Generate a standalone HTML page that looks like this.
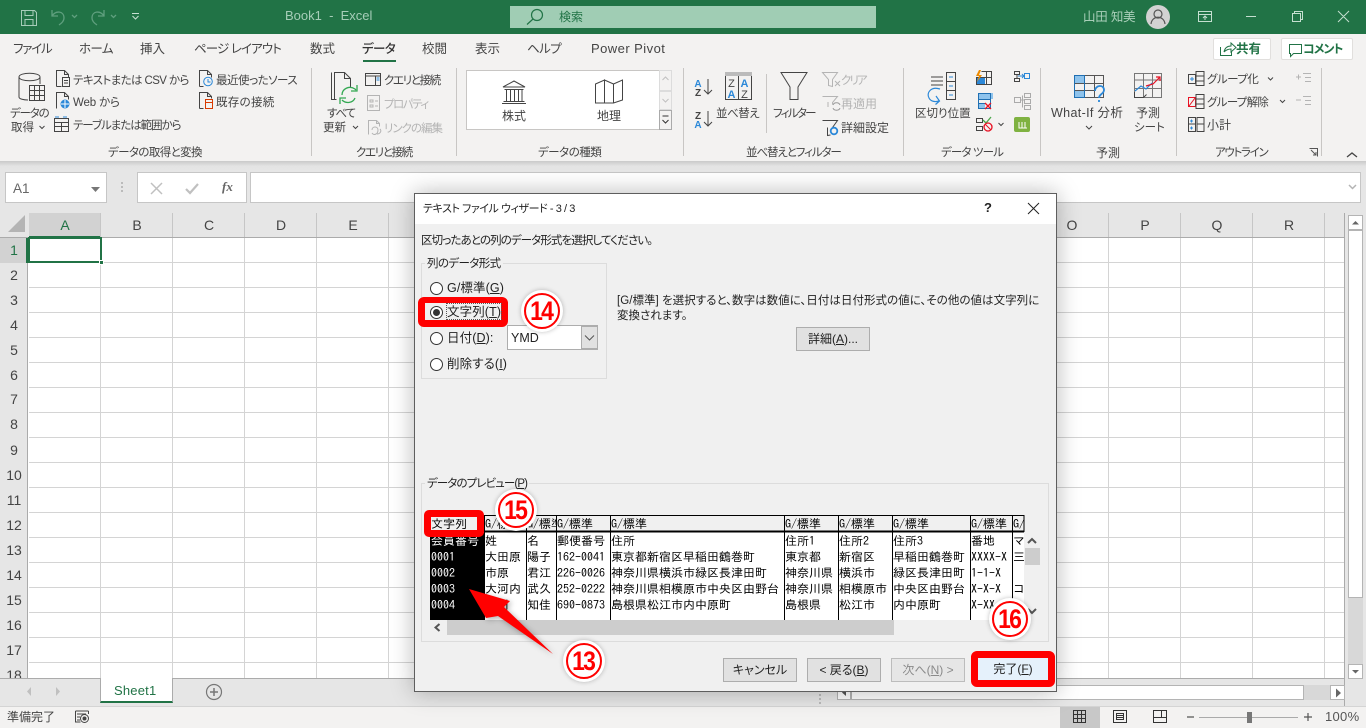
<!DOCTYPE html>
<html lang="ja"><head><meta charset="utf-8"><title>Book1 - Excel</title>
<style>
*{box-sizing:border-box}
html,body{margin:0;padding:0;width:1366px;height:728px;overflow:hidden;background:#fff}
body{font-family:"Liberation Sans","Noto Sans CJK JP",sans-serif;font-size:12px;color:#444;position:relative;font-feature-settings:"palt"}
.a{position:absolute}
.t{position:absolute;white-space:nowrap;line-height:18px;height:18px;color:#444}
.r{font-size:11.5px;margin-top:1px}
.g{color:#b4b4b4}
.tab{font-size:12.5px;color:#444}
.hd{font-size:14px;color:#444;top:216px;transform:translateX(-50%)}
.rn{font-size:14px;color:#444;left:0;width:28px;text-align:center}
.dl{color:#222;font-size:11.5px}
.m1{margin-top:1px}
.rl{color:#222;font-size:12.5px;letter-spacing:.1px}
.prev{position:absolute;font-family:"IPAGothic","Liberation Mono",monospace;font-size:12px;line-height:16px;white-space:nowrap;overflow:hidden;color:#000;font-feature-settings:normal}
.btn{position:absolute;height:24px;top:658px;width:74px;background:#e1e1e1;border:1px solid #adadad;text-align:center;line-height:22px;color:#222;font-size:12px}
u{text-underline-offset:1px}
.rad{position:absolute;width:13px;height:13px;border:1px solid #333;border-radius:50%;background:#fff}
.num{position:absolute;width:42px;height:42px;border-radius:50%;background:#fff;box-shadow:0 0 5px rgba(0,0,0,.25)}
.num i{position:absolute;left:3px;top:3px;width:36px;height:36px;border:2px solid #f00;border-radius:50%;background:#fff;font-style:normal;font-weight:bold;color:#f00;font-size:27px;line-height:32px;text-align:center;letter-spacing:-2px;font-family:"Liberation Sans",sans-serif}
.num i b{display:block;transform:scaleX(.85) translateX(-1px)}
</style></head><body>

<!-- Title bar -->
<div class="a" style="left:0;top:0;width:1366px;height:34px;background:#217346"></div>
<div class="a" style="left:510px;top:6px;width:366px;height:22px;background:#a0cdb4"></div>
<div class="t" style="left:285px;top:7px;color:#a6cdb8;font-size:13px;white-space:pre">Book1  -  Excel</div>
<div class="t" style="left:559px;top:8px;color:#217346;font-size:12px">検索</div>
<div class="t" style="left:1083px;top:8px;color:#a9cfb9;font-size:12.5px;letter-spacing:-.2px">山田 知美</div>

<!-- Ribbon bg -->
<div class="a" style="left:0;top:34px;width:1366px;height:127px;background:#f3f2f1"></div>
<div class="a" style="left:0;top:161px;width:1366px;height:52px;background:linear-gradient(#c9c9c9,#e3e3e3 5px,#e6e6e6 10px)"></div>

<!-- Tabs -->
<div class="t tab" style="left:13px;top:40px;letter-spacing:-1.2px">ファイル</div>
<div class="t tab" style="left:79px;top:40px;letter-spacing:-.6px">ホーム</div>
<div class="t tab" style="left:140px;top:40px">挿入</div>
<div class="t tab" style="left:194px;top:40px;letter-spacing:-.9px">ページ レイアウト</div>
<div class="t tab" style="left:310px;top:40px">数式</div>
<div class="t tab" style="left:362px;top:40px;font-weight:500;color:#333;letter-spacing:-.6px">データ</div>
<div class="a" style="left:363px;top:60px;width:33px;height:2px;background:#217346"></div>
<div class="t tab" style="left:422px;top:40px">校閲</div>
<div class="t tab" style="left:475px;top:40px">表示</div>
<div class="t tab" style="left:527px;top:40px;letter-spacing:-.6px">ヘルプ</div>
<div class="t tab" style="left:591px;top:40px;font-size:13px;letter-spacing:.45px">Power Pivot</div>
<div class="a" style="left:1213px;top:38px;width:58px;height:22px;background:#fff;border:1px solid #e1dfdd;border-radius:2px"></div>
<div class="t" style="left:1236px;top:40px;color:#217346;font-weight:bold;font-size:12.5px">共有</div>
<div class="a" style="left:1281px;top:38px;width:72px;height:22px;background:#fff;border:1px solid #e1dfdd;border-radius:2px"></div>
<div class="t" style="left:1303px;top:40px;color:#217346;font-weight:bold;font-size:12px;letter-spacing:-1px">コメント</div>

<!-- Gallery -->
<div class="a" style="left:466px;top:70px;width:206px;height:60px;background:#fff;border:1px solid #c8c6c4"></div>
<div class="a" style="left:659px;top:70px;width:13px;height:21px;background:#f3f2f1;border:1px solid #dcdcdc"></div>
<div class="a" style="left:659px;top:91px;width:13px;height:19px;background:#f3f2f1;border:1px solid #dcdcdc"></div>
<div class="a" style="left:659px;top:110px;width:13px;height:20px;background:#f3f2f1;border:1px solid #aaa"></div>

<!-- Ribbon labels -->
<div class="t r" style="left:10px;top:104px;letter-spacing:-1.2px">データの</div>
<div class="t r" style="left:11px;top:118px">取得</div>
<div class="t r" style="left:73px;top:71px;letter-spacing:-.6px">テキストまたは CSV から</div>
<div class="t r" style="left:73px;top:93px;letter-spacing:-.15px">Web から</div>
<div class="t r" style="left:73px;top:116px;letter-spacing:-1.05px">テーブルまたは範囲から</div>
<div class="t r" style="left:216px;top:71px;letter-spacing:-.5px">最近使ったソース</div>
<div class="t r" style="left:216px;top:93px;letter-spacing:.3px">既存の接続</div>
<div class="t r" style="left:108px;top:143px;letter-spacing:-.6px">データの取得と変換</div>
<div class="t r" style="left:327px;top:104px;letter-spacing:-1.2px">すべて</div>
<div class="t r" style="left:323px;top:118px">更新</div>
<div class="t r" style="left:384px;top:71px;letter-spacing:-1.35px">クエリと接続</div>
<div class="t r g" style="left:384px;top:95px;letter-spacing:-1.5px">プロパティ</div>
<div class="t r g" style="left:384px;top:119px;letter-spacing:-1px">リンクの編集</div>
<div class="t r" style="left:356px;top:143px;letter-spacing:-1.35px">クエリと接続</div>
<div class="t" style="left:502px;top:107px">株式</div>
<div class="t" style="left:597px;top:107px">地理</div>
<div class="t r" style="left:538px;top:143px;letter-spacing:-.5px">データの種類</div>
<div class="t r" style="left:716px;top:104px;letter-spacing:-.5px">並べ替え</div>
<div class="t r" style="left:773px;top:104px;letter-spacing:-1.7px">フィルター</div>
<div class="t r g" style="left:841px;top:71px;letter-spacing:-1.9px">クリア</div>
<div class="t g" style="left:841px;top:95px">再適用</div>
<div class="t" style="left:841px;top:119px">詳細設定</div>
<div class="t r" style="left:746px;top:143px;letter-spacing:-1.1px">並べ替えとフィルター</div>
<div class="t r" style="left:915px;top:104px">区切り位置</div>
<div class="t r" style="left:941px;top:143px;letter-spacing:-.85px">データ ツール</div>
<div class="t" style="left:1051px;top:104px;font-size:12.5px;letter-spacing:.35px">What-If 分析</div>
<div class="t" style="left:1136px;top:104px">予測</div>
<div class="t r" style="left:1134px;top:118px">シート</div>
<div class="t m1" style="left:1096px;top:143px">予測</div>
<div class="t r" style="left:1207px;top:70px;letter-spacing:-.5px">グループ化</div>
<div class="t r" style="left:1207px;top:93px;letter-spacing:-.7px">グループ解除</div>
<div class="t" style="left:1207px;top:116px">小計</div>
<div class="t r" style="left:1215px;top:143px;letter-spacing:-1.3px">アウトライン</div>

<!-- Formula bar -->
<div class="a" style="left:5px;top:172px;width:102px;height:31px;background:#fff;border:1px solid #c6c6c6"></div>
<div class="t" style="left:13px;top:180px;font-size:13.5px;color:#666">A1</div>
<div class="a" style="left:137px;top:172px;width:110px;height:31px;background:#fff;border:1px solid #c6c6c6"></div>
<div class="a" style="left:250px;top:172px;width:1111px;height:31px;background:#fff;border:1px solid #c6c6c6"></div>
<div class="t" style="left:222px;top:178px;font-family:'Liberation Serif',serif;font-style:italic;font-weight:bold;font-size:13px;color:#666">fx</div>

<!-- Grid -->
<div class="a" style="left:0;top:213px;width:1344px;height:25px;background:#e6e6e6;border-bottom:1px solid #ababab"></div>
<div class="a" style="left:29px;top:213px;width:72px;height:25px;background:#d2d2d2;border-bottom:2px solid #217346"></div>
<div class="a" style="left:0;top:238px;width:28px;height:440px;background:#e6e6e6;border-right:1px solid #ababab"></div>
<div class="a" style="left:0;top:238px;width:28px;height:25px;background:#d2d2d2;border-right:2px solid #217346"></div>
<div class="a" style="left:29px;top:238px;width:1315px;height:440px;background-color:#fff;background-image:linear-gradient(to right,#d4d4d4 1px,transparent 1px),linear-gradient(to bottom,#d4d4d4 1px,transparent 1px);background-size:72px 25px;background-position:71px 24px"></div>
<div class="a" style="left:29px;top:213px;width:1315px;height:24px;background-image:linear-gradient(to right,#c6c6c6 1px,transparent 1px);background-size:72px 24px;background-position:71px 0"></div>
<div class="t hd" style="left:65px;color:#217346">A</div>
<div class="t hd" style="left:137px">B</div><div class="t hd" style="left:209px">C</div><div class="t hd" style="left:281px">D</div><div class="t hd" style="left:353px">E</div>
<div class="t hd" style="left:1072px">O</div><div class="t hd" style="left:1145px">P</div><div class="t hd" style="left:1217px">Q</div><div class="t hd" style="left:1289px">R</div>
<div class="t rn" style="top:241px;color:#217346">1</div><div class="t rn" style="top:266px">2</div><div class="t rn" style="top:291px">3</div><div class="t rn" style="top:316px">4</div><div class="t rn" style="top:341px">5</div><div class="t rn" style="top:366px">6</div><div class="t rn" style="top:390px">7</div><div class="t rn" style="top:415px">8</div><div class="t rn" style="top:441px">9</div><div class="t rn" style="top:466px">10</div><div class="t rn" style="top:491px">11</div><div class="t rn" style="top:516px">12</div><div class="t rn" style="top:541px">13</div><div class="t rn" style="top:566px">14</div><div class="t rn" style="top:591px">15</div><div class="t rn" style="top:616px">16</div><div class="t rn" style="top:641px">17</div><div class="t rn" style="top:666px;height:12px;overflow:hidden">18</div>
<div class="a" style="left:28px;top:237px;width:74px;height:26px;border:2px solid #217346"></div>
<div class="a" style="left:99px;top:260px;width:5px;height:5px;background:#217346;border:1px solid #fff"></div>

<!-- Right scrollbar -->
<div class="a" style="left:1344px;top:213px;width:22px;height:493px;background:#e6e6e6;border-left:1px solid #ababab"></div>
<div class="a" style="left:1348px;top:215px;width:15px;height:449px;background:#d8d8d8"></div>
<div class="a" style="left:1348px;top:215px;width:15px;height:15px;background:#fff;border:1px solid #b4b4b4"></div>
<div class="a" style="left:1348px;top:230px;width:15px;height:368px;background:#fff;border:1px solid #b4b4b4"></div>
<div class="a" style="left:1348px;top:664px;width:15px;height:15px;background:#fff;border:1px solid #b4b4b4"></div>

<!-- Sheet tabs / status -->
<div class="a" style="left:0;top:678px;width:1344px;height:28px;background:#e6e6e6;border-top:1px solid #ababab"></div>
<div class="a" style="left:100px;top:678px;width:73px;height:25px;background:#fff;border:1px solid #ababab;border-top:0;border-bottom:2px solid #217346"></div>
<div class="t" style="left:114px;top:682px;color:#217346;font-size:13px;letter-spacing:.2px">Sheet1</div>
<div class="a" style="left:837px;top:685px;width:507px;height:15px;background:#d8d8d8"></div>
<div class="a" style="left:851px;top:685px;width:453px;height:15px;background:#fff;border:1px solid #b4b4b4"></div>
<div class="a" style="left:837px;top:685px;width:14px;height:15px;background:#fff;border:1px solid #b4b4b4"></div>
<div class="a" style="left:1330px;top:685px;width:15px;height:15px;background:#fff;border:1px solid #b4b4b4"></div>
<div class="a" style="left:0;top:706px;width:1366px;height:22px;background:#f3f2f1;border-top:1px solid #d4d4d4"></div>
<div class="a" style="left:1060px;top:707px;width:40px;height:21px;background:#c8c8c8"></div>
<div class="t" style="left:7px;top:708px;font-size:12px">準備完了</div>
<div class="t" style="left:1325px;top:708px;font-size:13px;color:#555;letter-spacing:.3px">100%</div>

<!-- Base icons -->
<svg class="a" style="left:0;top:0" width="1366" height="728" viewBox="0 0 1366 728" fill="none" stroke="#444" stroke-width="1">
<!-- qat -->
<g stroke="#a7cdb9"><path d="M21.500 10.500h13l2 2v13h-15zM25 10.500v5h8v-5M25 25.500v-6h8v6"/></g>
<g stroke="#5f9f7e" stroke-width="1.300"><path d="M52 10v6h6M52 16c4-6 12-5 12 2 0 3-2 5-5 7M104 10v6h-6M104 16c-4-6-12-5-12 2 0 3 2 5 5 7"/><path d="M72 15l2.500 2.500 2.500-2.500M111 15l2.500 2.500 2.500-2.500"/></g>
<path d="M132 13.500h7M132.500 16l3 3 3-3" stroke="#c8e0d3"/>
<!-- search -->
<g stroke="#217346" stroke-width="1.200"><circle cx="537" cy="15" r="5.500"/><path d="M533 19l-6 5.500"/></g>
<!-- avatar -->
<circle cx="1158" cy="17" r="12" fill="#d2d2d2" stroke="none"/>
<g stroke="#555" stroke-width="1.200"><circle cx="1158" cy="14" r="4"/><path d="M1151 24c1-9 13-9 14 0"/></g>
<!-- window -->
<g stroke="#c5dfd0"><path d="M1198.500 11.500h13v10h-13zM1198.500 14.500h13M1205 20v-4M1203 18l2-2 2 2"/><path d="M1246 16.500h10M1292.500 13.500h8v8h-8zM1294.500 13.500v-2h8v8h-2M1338 11l11 11M1349 11l-11 11"/></g>
<!-- share / comment -->
<g stroke="#217346"><path d="M1220.500 47v8.500h11v-4M1224 52c1-5 4-6 7-6v-3l5 4.500-5 4.500v-3c-3 0-5 1-7 3"/><path d="M1289.500 44.500h12v9h-8l-3 3v-3h-1z"/></g>
<!-- group separators -->
<g stroke="#c8c6c4"><path d="M311.500 68v88M456.500 68v88M683.500 68v88M903.500 68v88M1040.500 68v88M1176.500 68v88M1321.500 68v88M766.500 74v59"/></g>
<!-- get data -->
<g><path d="M19 77v20c0 2 5 3 9 3M19 77c0-5 21-5 21 0s-21 5-21 0M40 77v7"/><path d="M29.500 85.500h15v15h-15zM29.500 90.500h15M29.500 95.500h15M34.500 85.500v15M39.500 85.500v15"/></g>
<path d="M39.500 126l2.500 2.500 2.500-2.500M353 126l2.500 2.500 2.500-2.500"/>
<!-- doc icons -->
<g><path d="M56.500 86.500v-16h8l4 4v3M56.500 86.500h5M64.500 70.500v4h4"/><path d="M62.500 77.500h7v9h-7zM64 80.500h4M64 83h4"/></g>
<g><path d="M56.500 108.500v-16h8l4 4v3M64.500 92.500v4h4"/><circle cx="65" cy="104" r="4.500" fill="#2b88d8" stroke="none"/><path d="M61 104h8M65 100v8" stroke="#fff"/></g>
<g><path d="M54.500 118.500h14v13h-14zM54.500 122.500h14M54.500 126.500h14M61.500 122.500v9"/><path d="M55 117h4M63 117h4" stroke="#2b88d8"/></g>
<g><path d="M199.500 86.500v-16h8l4 4v3M199.500 86.500h4M207.500 70.500v4h4"/><circle cx="208" cy="81.500" r="4.300" stroke="#2b88d8"/><path d="M208 79v3h2.500" stroke="#2b88d8"/></g>
<g><path d="M199.500 108.500v-16h8l4 4v2M199.500 108.500h4M207.500 92.500v4h4"/><rect x="205.500" y="99.500" width="7" height="9" stroke="#d83b01"/><path d="M205.500 102.500h7" stroke="#d83b01"/></g>
<!-- refresh -->
<g><path d="M331.500 72.500v27h5M334.500 99v-26.500h10l6 6v9M344.500 72.500v6h6"/><path d="M342 95c0-6 7-10 13-6l1 1M355 98c-2 5-9 6-13 2" stroke="#33a852" stroke-width="1.300"/><path d="M357 85v6h-6M340 104v-6h6" stroke="#33a852" stroke-width="1.300"/></g>
<g><path d="M365.500 73.500h15v12h-15zM365.500 76h15M375.500 76v9.500"/><path d="M376.500 78h3M376.500 80h3" stroke="#2b88d8"/></g>
<g stroke="#b4b4b4"><path d="M367.500 95.500h12v15h-12zM370 100h3v2h-3zM370 105h3v2h-3zM375 101h3M375 106h3"/><path d="M368.500 134.500v-14h8l3 3v3M376.500 120.500v3h3"/><path d="M372 130c0-4 6-4 6 0s-4 6-6 3M380 129c2 2 0 5-3 5"/></g>
<!-- bank/map -->
<g><path d="M503 87l11-6 11 6zM504.500 89.500h19M506.500 90v11M510.500 90v11M514.500 90v11M518.500 90v11M522 90v11M503.500 101.500h21M502 103.500h24"/></g>
<g><path d="M595.500 84l9-4v23l-9-0zM604.500 80l9 4v19l-9-0zM613.500 84l9-4v20l-9 3"/></g>
<path d="M662.500 80l3-3 3 3" stroke="#c0c0c0"/><path d="M662.500 99l3 3 3-3" stroke="#c0c0c0"/><path d="M662.500 116h6M662.500 120l3 3 3-3" stroke="#333"/>
<!-- sort -->
<g stroke="#444"><path d="M708 79v15M704 90l4 4 4-4M708 111v15M704 122l4 4 4-4"/><path d="M725.500 72.500h26v27h-26zM738.500 76v23.500"/></g>
<rect x="725" y="72" width="27" height="4" fill="#bbb" stroke="none"/>
<g font-family="Liberation Sans,sans-serif" font-size="10" font-weight="bold" stroke="none" text-anchor="middle">
<text x="698" y="87" fill="#2b88d8">A</text><text x="698" y="96" fill="#444">Z</text>
<text x="698" y="119" fill="#444">Z</text><text x="698" y="128" fill="#2b88d8">A</text></g>
<g font-family="Liberation Sans,sans-serif" font-size="11" stroke="none" text-anchor="middle">
<text x="731.500" y="87" fill="#444">Z</text><text x="731.500" y="98" fill="#2b88d8" font-weight="bold">A</text>
<text x="744.500" y="87" fill="#2b88d8" font-weight="bold">A</text><text x="744.500" y="98" fill="#444">Z</text></g>
<!-- filter -->
<path d="M781 72.500h26l-9 14.500v12.500h-8v-12.500z"/>
<g stroke="#b4b4b4"><path d="M822.500 72.500h15l-5 7v7l-4-1v-6zM835 81l5 5M840 81l-5 5"/><path d="M822.500 96.500h15l-5 6v2M828 102v5"/><path d="M833 105c1-3 6-3 7 0M840 108c-1 3-6 3-7 0" stroke="#999"/></g>
<g><path d="M822.500 120.500h15l-5 7M827.500 127.500v8l3-.5"/><circle cx="834" cy="131" r="3.300" stroke="#2b88d8" stroke-width="1.800"/></g>
<!-- text to cols -->
<g><path d="M931 77h12M931 81h12M931 85h12"/><path d="M946.500 72.500h9v27h-9zM946.500 81.500h9M946.500 90.500h9"/><path d="M949 77h4M949 86h4M949 95h4" stroke="#2b88d8"/><path d="M940 89c-9-3-14 4-11 9 2 4 7 4 10 3M936 96l3.500 5-4 3.500" stroke="#2b88d8" stroke-width="1.200"/></g>
<!-- data tools -->
<rect x="977" y="77" width="8" height="7" fill="#2b88d8" stroke="none"/>
<path d="M976.500 77.500h15v7h-15zM981.500 71.500h10v13M986.500 71.500v13"/>
<path d="M979 70l-3 6h3l-2 6 5-7h-3l2-5z" fill="#ed8b00" stroke="none"/>
<rect x="979" y="93" width="14" height="6" fill="#8ec3ec" stroke="none"/><rect x="979" y="103" width="6" height="6" fill="#8ec3ec" stroke="none"/>
<path d="M978.500 93.500h12v15h-12zM978.500 99.500h12M978.500 103.500h7" stroke="#1f6fb2"/>
<path d="M985 103l6 6M991 103l-6 6" stroke="#e81123" stroke-width="1.300"/>
<path d="M976.500 118.500h6v4h-6zM976.500 126.500h6v4h-6z"/><path d="M983 120l3 3 5-6" stroke="#4aa64a" stroke-width="1.300"/><circle cx="988" cy="127" r="4" stroke="#e81123" stroke-width="1.300"/><path d="M985 124l6 6" stroke="#e81123"/>
<path d="M998.500 123l2.500 2.500 2.500-2.500"/>
<g><path d="M1014.500 71.500h5v3h-5zM1014.500 78.500h5v3h-5zM1017 74.500v4"/><path d="M1024.500 73.500h5v5h-5z" stroke="#2b88d8"/><path d="M1018 76h6M1022 74l2 2-2 2" stroke="#2b88d8"/></g>
<g stroke="#aaa"><path d="M1014.500 97.500h6v5h-6zM1024.500 93.500h6v4h-6zM1024.500 99.500h6v4h-6zM1024.500 105.500h6v4h-6zM1020.500 100h4M1022.500 95.500v12"/></g>
<rect x="1014" y="117" width="16" height="15" rx="2" fill="#7fb241" stroke="none"/><path d="M1019 122v6h8M1022 122v6M1025 122v6" stroke="#fff"/>
<!-- what if -->
<rect x="1075" y="75" width="9.500" height="9" fill="#8ec3ec" stroke="none"/><rect x="1075" y="90" width="9.500" height="7" fill="#8ec3ec" stroke="none"/>
<path d="M1074.500 75.500h29v22h-29zM1074.500 83.500h29M1074.500 90.500h20M1084.500 75.500v22M1094.500 75.500v22" stroke="#555"/>
<path d="M1074.500 75.500h10v22h-10z" stroke="#1f6fb2"/>
<path d="M1095 91c0-6 9-7 9-1 0 4-5 4-5 8M1099 100v2" stroke="#2b88d8" stroke-width="1.800"/>
<path d="M1086 126l3 3 3-3"/>
<!-- forecast -->
<path d="M1134.500 73.500h27v24h-27zM1134.500 80h27M1143.500 73.500v24M1152.500 73.500v24M1134.500 88.500h27" stroke="#777"/>
<path d="M1135 91l6-5 5 3 6-6" stroke="#2b88d8" stroke-width="1.200"/><path d="M1146 86l7-2 7-7M1156 77h4v4" stroke="#e81123" stroke-width="1.200"/>
<path d="M1134.500 92v5.500h9l3-3"/>
<!-- outline -->
<g><path d="M1188.500 74.500h7v9h-7zM1196 71.500h8v14h-8zM1196 76h8M1196 81h8"/><path d="M1190 79h4M1192 77v4" stroke="#2b88d8"/></g>
<path d="M1268 77.500l2.500 2.500 2.500-2.500M1280 100l2.500 2.500 2.500-2.500"/>
<g><path d="M1188.500 97.500h7v9h-7z" stroke="#e81123"/><path d="M1189 106l6-8" stroke="#e81123"/><path d="M1196 94.500h8v14h-8zM1196 99h8M1196 104h8"/></g>
<g><path d="M1188.500 117.500h7v14h-7zM1188.500 124h7"/><path d="M1197 117.500h7v14h-7zM1197 124h7"/><path d="M1190 121h3M1191.500 119.500v3M1190 128h3M1191.500 126.500v3" stroke="#2b88d8"/></g>
<g stroke="#b4b4b4"><path d="M1296 77h5M1298.500 74.500v5M1303 73.500h8M1305 77.500h6M1305 81.500h6"/><path d="M1296 100h5M1303 96.500h8M1305 100.500h6M1305 104.500h6"/></g>
<path d="M1309.500 148.500h8v8M1311 150l5 5M1316 152v3h-3" stroke="#555"/>
<path d="M1347 157l5-4 5 4" stroke="#444" stroke-width="1.300"/>
<!-- formula -->
<path d="M91 187h9l-4.500 5z" fill="#777" stroke="none"/>
<g fill="#bbb" stroke="none"><rect x="121" y="182" width="2" height="2"/><rect x="121" y="186" width="2" height="2"/><rect x="121" y="190" width="2" height="2"/></g>
<path d="M151 183l11 11M162 183l-11 11" stroke="#c0c0c0" stroke-width="1.500"/>
<path d="M186 189l4 4 8-9" stroke="#c0c0c0" stroke-width="2.200"/>
<path d="M1349 185l3.500 3.500 3.500-3.500" stroke="#b4b4b4" stroke-width="1.500"/>
<path d="M25 232h-17l17-17z" fill="#b4b4b4" stroke="none"/>
<path d="M1352 224.500l3.500-3.500 3.500 3.500z" fill="#666" stroke="none"/>
<path d="M1352 670l3.500 3.500 3.500-3.500z" fill="#666" stroke="none"/>
<path d="M1336 688.500v9l5-4.500z" fill="#666" stroke="none"/>
<path d="M846 689v7l-4-3.500z" fill="#555" stroke="none"/>
<g fill="#bbb" stroke="none"><rect x="819" y="694" width="2" height="2"/><rect x="819" y="698" width="2" height="2"/><rect x="819" y="702" width="2" height="2"/></g>
<!-- sheet nav -->
<path d="M31 687v9l-4-4.500z" fill="#c0c0c0" stroke="none"/><path d="M56 687v9l4-4.500z" fill="#c0c0c0" stroke="none"/>
<g stroke="#777" stroke-width="1.200"><circle cx="214" cy="692" r="7.500"/><path d="M210 692h8M214 688v8" stroke-width="1.500"/></g>
<!-- status -->
<g><path d="M75.500 711h13M75.500 711v11h5M88.500 711v3M77 714h9M77 717h3M77 720h3"/><circle cx="84.500" cy="718.500" r="4"/><circle cx="84.500" cy="718.500" r="1.500" fill="#444"/></g>
<g stroke="#333"><path d="M1073.500 710.500h12v12h-12zM1077.500 710.500v12M1081.500 710.500v12M1073.500 714.500h12M1073.500 718.500h12"/><path d="M1113.500 710.500h13v12h-13zM1116.500 713.500h7v6h-7zM1116.500 715.500h7M1116.500 717.500h7"/><path d="M1153.500 710.500h13v12h-13zM1153.500 717.500h8v-7M1166.500 717.500h-5"/></g>
<path d="M1187 717h7M1304 717h8M1308 713v8" stroke="#555" stroke-width="1.200"/>
<path d="M1199 717.500h99" stroke="#aaa"/>
<rect x="1247" y="712" width="5" height="11" fill="#777" stroke="none"/>
</svg>

<!-- Dialog -->
<div class="a" style="left:414px;top:193px;width:643px;height:499px;background:#f0f0f0;border:1px solid #5e5e5e;box-shadow:0 0 22px rgba(0,0,0,.28)"></div>
<div class="a" style="left:415px;top:194px;width:641px;height:30px;background:#fff"></div>
<div class="t dl" style="left:423px;top:200px;font-size:11px;letter-spacing:-.45px">テキスト ファイル ウィザード - 3 / 3</div>
<div class="t" style="left:984px;top:199px;font-size:13px;color:#222;font-weight:bold">?</div>
<div class="t dl m1" style="left:421px;top:231px;letter-spacing:-.9px">区切ったあとの列のデータ形式を選択してください。</div>
<div class="a" style="left:421px;top:263px;width:186px;height:116px;border:1px solid #dcdcdc"></div>
<div class="t dl m1" style="left:425px;top:254px;background:#f0f0f0;padding:0 2px;letter-spacing:-.6px">列のデータ形式</div>

<!-- red box 14 -->
<div class="a" style="left:418px;top:297px;width:90px;height:30px;border:7px solid #f00;border-radius:6px;border-width:6px 7px 7px 7px"></div>
<div class="rad" style="left:430px;top:282px"></div>
<div class="rad" style="left:430px;top:306px"></div><div class="a" style="left:433px;top:309px;width:7px;height:7px;border-radius:50%;background:#333"></div>
<div class="rad" style="left:430px;top:332px"></div>
<div class="rad" style="left:430px;top:358px"></div>
<div class="t rl" style="left:447px;top:279px">G/標準(<u>G</u>)</div>
<div class="t rl" style="left:447px;top:303px;outline:1px dotted #555;outline-offset:-1px;height:17px;padding:0 1px;margin-left:-1px">文字列(<u>T</u>)</div>
<div class="t rl" style="left:447px;top:329px">日付(<u>D</u>):</div>
<div class="t rl" style="left:447px;top:355px">削除する(<u>I</u>)</div>
<div class="a" style="left:507px;top:325px;width:91px;height:25px;background:#fff;border:1px solid #adadad"></div>
<div class="a" style="left:581px;top:326px;width:17px;height:23px;background:#e1e1e1;border:1px solid #adadad"></div>
<div class="t dl" style="left:511px;top:329px;font-size:12.5px">YMD</div>
<div class="t dl m1" style="left:617px;top:291px;letter-spacing:.04px">[G/標準] を選択すると、数字は数値に、日付は日付形式の値に、その他の値は文字列に</div>
<div class="t dl m1" style="left:617px;top:306px">変換されます。</div>
<div class="btn" style="left:796px;top:327px">詳細(<u>A</u>)...</div>

<!-- preview group -->
<div class="a" style="left:421px;top:483px;width:628px;height:159px;border:1px solid #dcdcdc"></div>
<div class="t dl m1" style="left:425px;top:474px;background:#f0f0f0;padding:0 2px;letter-spacing:-.9px">データのプレビュー(<u>P</u>)</div>

<div class="a" style="left:430px;top:515px;width:594px;height:105px;background:#fff"></div>
<div class="a" style="left:430px;top:516px;width:594px;height:15px;background:#f0f0f0"></div>
<div class="a" style="left:430px;top:533px;width:54px;height:87px;background:#000"></div>
<div class="prev" style="left:431px;top:516px;width:53px">文字列</div>
<div class="prev" style="left:485px;top:516px;width:41px">G/標準</div>
<div class="prev" style="left:527px;top:516px;width:29px">G/標準</div>
<div class="prev" style="left:557px;top:516px;width:53px">G/標準</div>
<div class="prev" style="left:611px;top:516px;width:173px">G/標準</div>
<div class="prev" style="left:785px;top:516px;width:53px">G/標準</div>
<div class="prev" style="left:839px;top:516px;width:53px">G/標準</div>
<div class="prev" style="left:893px;top:516px;width:77px">G/標準</div>
<div class="prev" style="left:971px;top:516px;width:41px">G/標準</div>
<div class="prev" style="left:1013px;top:516px;width:11px">G/標準</div>

<div class="prev" style="left:431px;top:533px;width:53px;color:#fff">会員番号<br>0001<br>0002<br>0003<br>0004</div>
<div class="prev" style="left:485px;top:533px;width:41px">姓<br>大田原<br>市原<br>大河内<br>小川</div>
<div class="prev" style="left:527px;top:533px;width:29px">名<br>陽子<br>君江<br>武久<br>知佳</div>
<div class="prev" style="left:557px;top:533px;width:53px">郵便番号<br>162-0041<br>226-0026<br>252-0222<br>690-0873</div>
<div class="prev" style="left:611px;top:533px;width:173px">住所<br>東京都新宿区早稲田鶴巻町<br>神奈川県横浜市緑区長津田町<br>神奈川県相模原市中央区由野台<br>島根県松江市内中原町</div>
<div class="prev" style="left:785px;top:533px;width:53px">住所1<br>東京都<br>神奈川県<br>神奈川県<br>島根県</div>
<div class="prev" style="left:839px;top:533px;width:53px">住所2<br>新宿区<br>横浜市<br>相模原市<br>松江市</div>
<div class="prev" style="left:893px;top:533px;width:77px">住所3<br>早稲田鶴巻町<br>緑区長津田町<br>中央区由野台<br>内中原町</div>
<div class="prev" style="left:971px;top:533px;width:41px">番地<br>XXXX-X<br>1-1-X<br>X-X-X<br>X-XX</div>
<div class="prev" style="left:1013px;top:533px;width:11px">マ<br>三<br><br>コ</div>

<svg class="a" style="left:0;top:0" width="1366" height="728" viewBox="0 0 1366 728" fill="none" stroke="#000">
<path d="M430 515.500h594"/>
<path d="M430 531.500h594" stroke-width="2"/>
<path d="M484.500 515v105M526.500 515v105M556.500 515v105M610.500 515v105M784.500 515v105M838.500 515v105M892.500 515v105M970.500 515v105M1012.500 515v105M1024 515v17"/>
<path d="M1028 203l11 11M1039 203l-11 11" stroke="#222"/>
<path d="M585 335.500l4.500 4.500 4.500-4.500" stroke="#555"/>
<path d="M1028 543l4-4 4 4M1028 609l4 4 4-4" stroke="#555" stroke-width="2"/>
</svg>
<div class="a" style="left:430px;top:620px;width:594px;height:15px;background:#f0f0f0"></div>
<div class="a" style="left:447px;top:620px;width:447px;height:15px;background:#cdcdcd"></div>
<svg class="a" style="left:430px;top:620px" width="16" height="15" fill="none" stroke="#555" stroke-width="2"><path d="M9.500 4l-4 3.500 4 3.500"/></svg>
<div class="a" style="left:1025px;top:548px;width:15px;height:17px;background:#cdcdcd"></div>

<!-- Buttons -->
<div class="btn" style="left:723px">キャンセル</div>
<div class="btn" style="left:807px">&lt; 戻る(<u>B</u>)</div>
<div class="btn" style="left:891px;color:#8a8a8a;background:#e6e6e6;border-color:#bcbcbc">次へ(<u>N</u>) &gt;</div>
<div class="btn" style="left:978px;width:70px;height:22px;line-height:22px;background:#e5f1fb;border:0">完了(<u>F</u>)</div>

<!-- Annotations -->
<div class="a" style="left:424px;top:510px;width:60px;height:27px;border:7px solid #f00;border-radius:5px"></div>
<div class="a" style="left:971px;top:651px;width:84px;height:36px;border:7px solid #f00;border-radius:6px"></div>
<svg class="a" style="left:0;top:0;filter:drop-shadow(2px 2px 3px rgba(0,0,0,.3))" width="1366" height="728"><path d="M469 589L510 601L504 607L553 654L498 616L486 618Z" fill="#f00"/></svg>
<div class="num" style="left:521px;top:290px"><i><b>14</b></i></div>
<div class="num" style="left:495px;top:489px"><i><b>15</b></i></div>
<div class="num" style="left:563px;top:640px"><i><b>13</b></i></div>
<div class="num" style="left:989px;top:598px"><i><b>16</b></i></div>
</body></html>
